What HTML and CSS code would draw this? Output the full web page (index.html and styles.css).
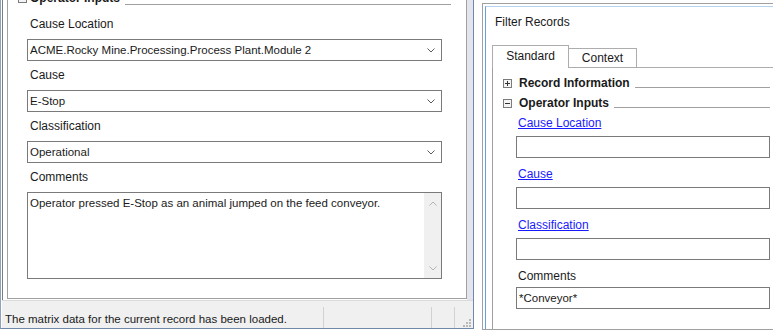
FILE: index.html
```html
<!DOCTYPE html>
<html lang="en">
<head>
    <meta charset="UTF-8">
    <title>Record Details and Filter Records</title>
    <link rel="stylesheet" href="styles.css">
</head>
<body>
<div class="desk">
    <div class="recwin">
        <div class="recbody">
            <div class="pane">
                <div class="group">
                    <div class="grouphead">
                        <svg class="toggle" width="9" height="9" viewBox="0 0 9 9"><rect x="0.5" y="0.5" width="8" height="8" fill="#f4f4f4" stroke="#7b7b7b"/><path d="M2 4.5h5" stroke="#333"/></svg>
                        <span class="headtext">Operator Inputs</span>
                        <span class="rule"></span>
                    </div>

                    <div class="label">Cause Location</div>
                    <div class="combo">
                        <span>ACME.Rocky Mine.Processing.Process Plant.Module 2</span>
                        <svg width="8" height="5" viewBox="0 0 8 5"><path d="M0.5 0.5l3.5 3.5l3.5-3.5" fill="none" stroke="#5a5a5a"/></svg>
                    </div>

                    <div class="label">Cause</div>
                    <div class="combo">
                        <span>E-Stop</span>
                        <svg width="8" height="5" viewBox="0 0 8 5"><path d="M0.5 0.5l3.5 3.5l3.5-3.5" fill="none" stroke="#5a5a5a"/></svg>
                    </div>

                    <div class="label">Classification</div>
                    <div class="combo">
                        <span>Operational</span>
                        <svg width="8" height="5" viewBox="0 0 8 5"><path d="M0.5 0.5l3.5 3.5l3.5-3.5" fill="none" stroke="#5a5a5a"/></svg>
                    </div>

                    <div class="label">Comments</div>
                    <div class="memo">
                        <div class="memo-text">Operator pressed E-Stop as an animal jumped on the feed conveyor.</div>
                        <div class="vscroll">
                            <svg width="8" height="5" viewBox="0 0 8 5"><path d="M0.5 4.5l3.5-3.5l3.5 3.5" fill="none" stroke="#b4b4b4"/></svg>
                            <svg width="8" height="5" viewBox="0 0 8 5"><path d="M0.5 0.5l3.5 3.5l3.5-3.5" fill="none" stroke="#b4b4b4"/></svg>
                        </div>
                    </div>
                </div>
            </div>
            <div class="strip"></div>
        </div>
        <div class="status">
            <div class="cell cell-text">The matrix data for the current record has been loaded.</div>
            <div class="cell cell-mid"></div>
            <div class="cell cell-small"></div>
            <div class="grip">
                <svg width="9" height="9" viewBox="0 0 9 9" fill="#b8b8b8">
                    <rect x="7" y="1" width="2" height="2"/>
                    <rect x="4" y="4" width="2" height="2"/><rect x="7" y="4" width="2" height="2"/>
                    <rect x="1" y="7" width="2" height="2"/><rect x="4" y="7" width="2" height="2"/><rect x="7" y="7" width="2" height="2"/>
                </svg>
            </div>
        </div>
    </div>

    <div class="filterwin">
        <div class="fw-inner">
            <div class="fw-title">Filter Records</div>
            <div class="tabs">
                <div class="tab selected">Standard</div>
                <div class="tab">Context</div>
            </div>
            <div class="tabpage">
                <div class="sec">
                    <svg class="toggle" width="9" height="9" viewBox="0 0 9 9"><rect x="0.5" y="0.5" width="8" height="8" fill="#f4f4f4" stroke="#7b7b7b"/><path d="M2 4.5h5M4.5 2v5" stroke="#333"/></svg>
                    <span class="headtext">Record Information</span>
                    <span class="rule"></span>
                </div>
                <div class="sec">
                    <svg class="toggle" width="9" height="9" viewBox="0 0 9 9"><rect x="0.5" y="0.5" width="8" height="8" fill="#f4f4f4" stroke="#7b7b7b"/><path d="M2 4.5h5" stroke="#333"/></svg>
                    <span class="headtext">Operator Inputs</span>
                    <span class="rule"></span>
                </div>
                <div class="fields">
                    <a class="link" href="#">Cause Location</a>
                    <div class="box"></div>
                    <a class="link" href="#">Cause</a>
                    <div class="box"></div>
                    <a class="link" href="#">Classification</a>
                    <div class="box"></div>
                    <span class="plain">Comments</span>
                    <div class="box">*Conveyor*</div>
                </div>
            </div>
        </div>
    </div>
</div>
</body>
</html>
```

FILE: styles.css
```css
body {
    margin: 0;
    width: 773px;
    height: 333px;
    overflow: hidden;
    background-color: #ffffff;
    font-family: "Liberation Sans", Arial, sans-serif;
    font-size: 12px;
    color: #1a1a1a;
}

.desk {
    display: flex;
    align-items: flex-start;
    height: 333px;
}

/* left window: record details */
.recwin {
    flex: none;
    width: 474px;
    height: 329px;
    box-sizing: border-box;
    border-left: 1px solid #8fa2bc;
    border-right: 1px solid #6f89ab;
    border-bottom: 1px solid #6f89ab;
    padding-left: 1px;
    display: flex;
    flex-direction: column;
}

.recbody {
    display: flex;
    height: 300px;
}

.pane {
    width: 465px;
    box-sizing: border-box;
    border-left: 1px solid #7d7d7d;
    padding-left: 4px;
    background-color: #ffffff;
}

.group {
    width: 460px;
    height: 299px;
    box-sizing: border-box;
    border-left: 1px solid #a0a0a0;
    border-right: 1px solid #a0a0a0;
    border-bottom: 1px solid #a0a0a0;
    padding-left: 19px;
    display: flex;
    flex-direction: column;
    align-items: flex-start;
}

.grouphead {
    display: flex;
    align-items: center;
    align-self: stretch;
    height: 20px;
    margin: -12px 15px 0 -9px;
}

.grouphead .toggle {
    margin-right: 3px;
}

.toggle {
    flex: none;
    margin-right: 7px;
}

.headtext {
    font-weight: bold;
    white-space: nowrap;
}

.rule {
    flex: 1;
    align-self: flex-end;
    height: 0;
    border-top: 1px solid #a0a0a0;
    margin: 0 0 3px 5px;
}

.label {
    line-height: 16px;
    margin: 0 0 7px 3px;
}

.grouphead + .label {
    margin-top: 8px;
}

.combo {
    width: 415px;
    height: 22px;
    box-sizing: border-box;
    border: 1px solid #7a7a7a;
    margin-bottom: 6px;
    padding: 0 6px 0 2px;
    display: flex;
    align-items: center;
    justify-content: space-between;
    font-size: 11.5px;
}

.memo {
    width: 415px;
    height: 87px;
    box-sizing: border-box;
    border: 1px solid #7a7a7a;
    display: flex;
    font-size: 11.5px;
}

.memo-text {
    flex: 1;
    padding: 3px 2px;
    line-height: 14px;
}

.vscroll {
    width: 17px;
    background-color: #f0f0f0;
    display: flex;
    flex-direction: column;
    justify-content: space-between;
    align-items: center;
    padding: 8px 0 7px;
}

.strip {
    width: 6px;
    background-color: #e4e4ee;
}

.status {
    display: flex;
    height: 28px;
    box-sizing: border-box;
    border-top: 1px solid #dadada;
    background-color: #f0f0f0;
    font-size: 11.5px;
}

.cell {
    margin-top: 6px;
    border-right: 1px solid #d2d2d2;
}

.cell-text {
    width: 322px;
    box-sizing: border-box;
    padding: 4px 0 0 3px;
    line-height: 16px;
    white-space: nowrap;
}

.cell-mid {
    width: 107px;
}

.cell-small {
    width: 22px;
}

.grip {
    flex: 1;
    display: flex;
    align-items: flex-end;
    justify-content: flex-end;
    padding: 0 2px 1px 0;
}

/* right window: filter records */
.filterwin {
    flex: none;
    width: 291px;
    height: 327px;
    margin: 3px 0 0 8px;
    box-sizing: border-box;
    border: 1px solid #a0a0a0;
    border-right: none;
    padding: 2px 0 0 2px;
}

.fw-inner {
    height: 100%;
    box-sizing: border-box;
    border-left: 1px solid #64a0dc;
    border-top: 1px solid #b5d3f0;
    padding-left: 6px;
    display: flex;
    flex-direction: column;
}

.fw-title {
    line-height: 16px;
    margin: 7px 0 0 3px;
}

.tabs {
    display: flex;
    align-items: flex-end;
    height: 22px;
    margin-top: 15px;
    border-bottom: 1px solid #adadad;
    flex: none;
}

.tab {
    width: 68px;
    height: 19px;
    box-sizing: border-box;
    border: 1px solid #adadad;
    border-bottom: none;
    background-color: #ffffff;
    text-align: center;
    line-height: 19px;
}

.tab.selected {
    width: 77px;
    height: 23px;
    margin-bottom: -1px;
    line-height: 20px;
    position: relative;
}

.tab.selected + .tab {
    border-left: none;
}

.tabpage {
    flex: 1;
    min-height: 0;
    overflow: hidden;
    border-left: 1px solid #a0a0a0;
    padding: 7px 3px 0 10px;
}

.sec {
    display: flex;
    align-items: center;
    height: 16px;
    margin-bottom: 4px;
}

.fields {
    display: flex;
    flex-direction: column;
    align-items: flex-start;
    margin-left: 13px;
}

.link {
    color: #1a1aff;
    text-decoration: underline;
    line-height: 16px;
    margin: 0 0 5px 2px;
}

.plain {
    line-height: 16px;
    margin: 0 0 3px 2px;
}

.box {
    align-self: stretch;
    height: 22px;
    box-sizing: border-box;
    border: 1px solid #7a7a7a;
    margin-bottom: 8px;
    padding-left: 2px;
    line-height: 20px;
    font-size: 11.5px;
}
```
